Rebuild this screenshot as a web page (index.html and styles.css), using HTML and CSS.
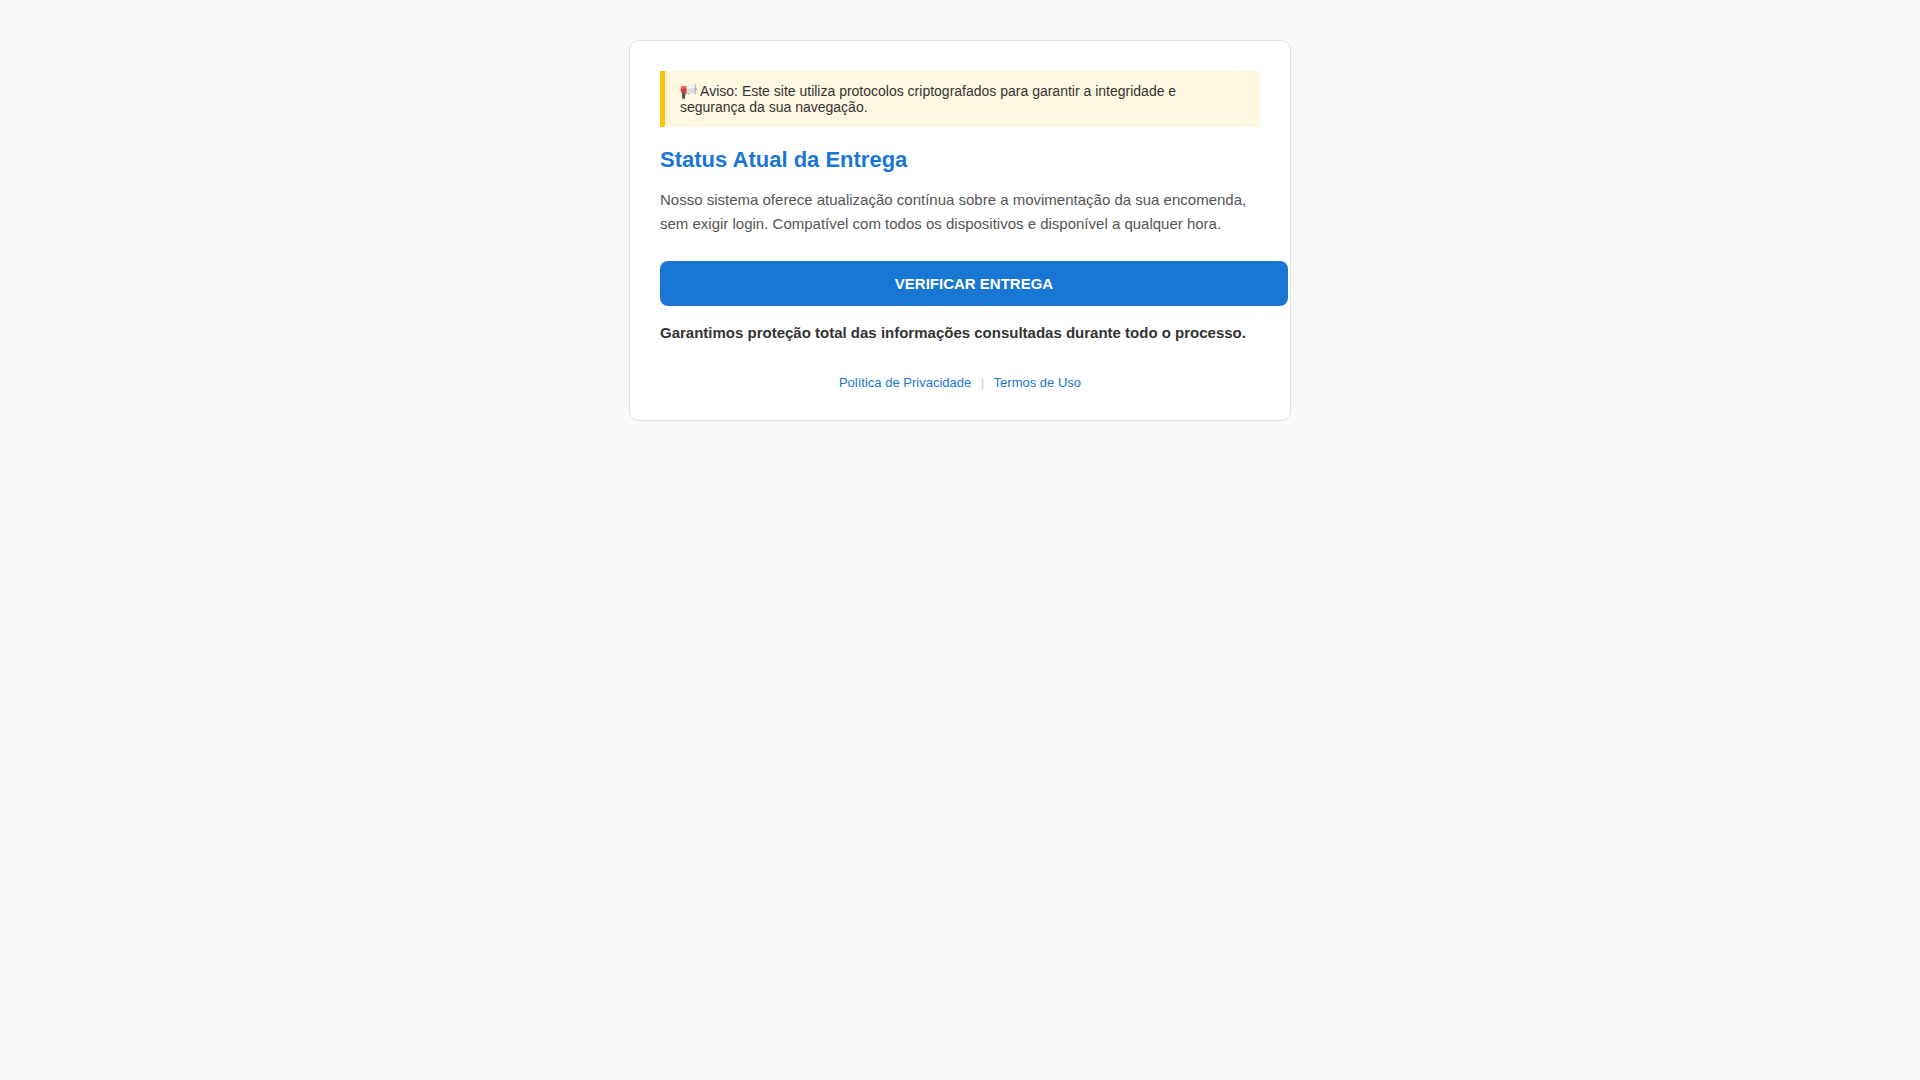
FILE: index.html
```html
<!DOCTYPE html>
<html lang="pt-BR">
<head>
  <meta charset="UTF-8">
  <meta name="viewport" content="width=device-width, initial-scale=1.0">
  <title>Status Atual da Entrega</title>
  <link rel="stylesheet" href="styles.css">
</head>
<body>
  <main class="container">
    <div class="aviso">
      <svg class="icone" viewBox="0 0 17 16" aria-hidden="true">
        <path d="M2 9h3.6l-.6 6.3c0 .7-2.8.7-2.8 0z" fill="#4b5157"/>
        <path d="M5.4 9.3l4.6 1.5-.4.8-4.3-1.3z" fill="#9a9ea0"/>
        <path d="M.8 4.8c0-.9.5-1.3 1.4-1.4l4.8-.6v6.9l-5.2-.1c-.7 0-1-.4-1-1z" fill="#e53935"/>
        <path d="M1 4.8c.2-.8.6-1.1 1.3-1.2L7 3v2L.9 5.9z" fill="#fb5f53"/>
        <path d="M6.5 3.1C10 2.8 13 1.8 15.3.7c.8 2.6.9 7.9.1 11-2.5-1.2-5.4-2.1-8.9-2.2z" fill="#dadddf"/>
        <path d="M6.5 3.3c3.3-.3 6-1.1 8.2-2.1l.3 3.2c-2.5.8-5.2 1.2-8.5 1.2z" fill="#eff1f2"/>
        <path d="M15.3.7c1 2.4 1.1 8.4.1 11-.6-2.5-.7-8.4-.1-11z" fill="#b4babd"/>
        <path d="M15.9 5c.9 0 .9 2.3 0 2.3z" fill="#858b8f"/>
      </svg>
      Aviso: Este site utiliza protocolos criptografados para garantir a integridade e<br>
      segurança da sua navegação.
    </div>
    <h1>Status Atual da Entrega</h1>
    <p>Nosso sistema oferece atualização contínua sobre a movimentação da sua encomenda, sem exigir login. Compatível com todos os dispositivos e disponível a qualquer hora.</p>
    <a class="botao" href="#">VERIFICAR ENTREGA</a>
    <div class="garantia">Garantimos proteção total das informações consultadas durante todo o processo.</div>
    <footer class="rodape">
      <a href="#">Política de Privacidade</a>
      <span>|</span>
      <a href="#">Termos de Uso</a>
    </footer>
  </main>
</body>
</html>
```

FILE: styles.css
```css
body {
  margin: 0;
  padding: 0;
  background-color: #f9f9f9;
  color: #333;
  font-family: "Liberation Sans", Arial, sans-serif;
}
.container {
  max-width: 600px;
  margin: 40px auto;
  padding: 30px;
  background: #fff;
  border: 1px solid #e0e0e0;
  border-radius: 10px;
}
.aviso {
  margin-bottom: 20px;
  padding: 12px 15px;
  background-color: #fff8e1;
  border-left: 5px solid #ffc107;
  font-size: 14px;
  line-height: 16px;
}
.icone {
  width: 17px;
  height: 16px;
  vertical-align: top;
}
h1 {
  margin: 0 0 15px;
  color: #1976d2;
  font-size: 22px;
}
p {
  margin: 0 0 25px;
  color: #555;
  font-size: 15px;
  line-height: 1.6;
}
.botao {
  display: block;
  width: 100%;
  padding: 14px;
  background-color: #1976d2;
  border-radius: 8px;
  color: #fff;
  font-size: 15px;
  font-weight: bold;
  text-align: center;
  text-decoration: none;
}
.garantia {
  margin-top: 18px;
  font-size: 15px;
  font-weight: bold;
}
.rodape {
  margin-top: 34px;
  color: #ccc;
  font-size: 13px;
  text-align: center;
}
.rodape a {
  color: #1976d2;
  text-decoration: none;
}
.rodape span {
  margin: 0 6px;
}
```
